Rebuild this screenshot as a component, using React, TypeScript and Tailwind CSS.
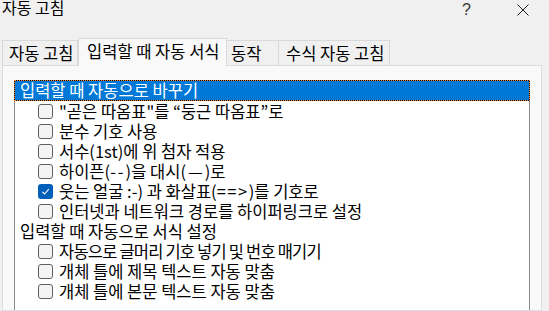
import React from "react";

const font = { fontFamily: '"Noto Sans CJK KR", "Noto Sans", sans-serif' };

function Box({ checked }: { checked?: boolean }) {
  if (checked) {
    return (
      <div className="w-[15px] h-[15px] rounded-[3px] bg-[#005fb8] flex items-center justify-center shrink-0">
        <svg width="11" height="11" viewBox="0 0 11 11">
          <path d="M2.3 5.8 L4.6 8 L8.8 3.2" fill="none" stroke="white" strokeWidth="1.1" />
        </svg>
      </div>
    );
  }
  return <div className="w-[15px] h-[15px] rounded-[3px] border border-[#5f5f5f] bg-[#f4f4f4] shrink-0" />;
}

function Row({ label, checked, tight }: { label: React.ReactNode; checked?: boolean; tight?: boolean }) {
  return (
    <div className="h-[20px] flex items-center pl-[23px]">
      <Box checked={checked} />
      <span
        className={
          tight
            ? "ml-[6px] text-[16.5px] leading-[20px] text-black whitespace-nowrap tracking-[-0.8px]"
            : "ml-[6px] text-[16.5px] leading-[20px] text-black whitespace-nowrap"
        }
      >
        {label}
      </span>
    </div>
  );
}

export default function App() {
  return (
    <div className="w-[549px] h-[311px] bg-[#f0f0f0] overflow-hidden flex flex-col" style={font}>
      <div className="h-[38px] flex items-start shrink-0">
        <span className="ml-[2px] mt-[-3px] text-[16px] leading-[20px] text-black whitespace-nowrap">자동 고침</span>
        <div className="ml-auto flex items-start mr-[20px] mt-[3px]">
          <span className="text-[16px] leading-[14px] text-[#333]" style={{ fontFamily: '"Liberation Sans", sans-serif' }}>?</span>
          <svg className="ml-[46px] mt-[1px]" width="12" height="12" viewBox="0 0 12 12">
            <path d="M0.5 0.5 L11.5 11.5 M11.5 0.5 L0.5 11.5" stroke="#222" strokeWidth="1" />
          </svg>
        </div>
      </div>
      <div className="h-[27px] flex items-end pl-[2px] shrink-0">
        <div className="w-[76px] h-[25px] border border-b-0 border-[#d9d9d9] bg-[#f0f0f0] pl-[6px] text-[16.5px] leading-[24px] text-black whitespace-nowrap overflow-hidden">
          자동 고침
        </div>
        <div className="relative z-10 w-[149px] h-[28px] -mb-px border border-b-0 border-[#d9d9d9] bg-[#f9f9f9] pl-[8px] text-[16.5px] leading-[24px] text-black whitespace-nowrap overflow-hidden">
          입력할 때 자동 서식
        </div>
        <div className="w-[52px] h-[25px] border border-b-0 border-l-0 border-[#d9d9d9] bg-[#f0f0f0] pl-[4px] text-[16.5px] leading-[24px] text-black whitespace-nowrap overflow-hidden">
          동작
        </div>
        <div className="w-[111px] h-[25px] border border-b-0 border-l-0 border-[#d9d9d9] bg-[#f0f0f0] pl-[7px] text-[16.5px] leading-[24px] text-black whitespace-nowrap overflow-hidden">
          수식 자동 고침
        </div>
      </div>
      <div className="flex-1 ml-[2px] mr-[7px] border border-[#dcdcdc] bg-[#f9f9f9] pt-[14px] pl-[11px] overflow-hidden">
        <div className="w-[516px]">
          <div className="h-[21px] bg-black">
            <div className="h-full border border-dotted border-[#ff8a26] bg-[#0078d7] bg-clip-padding pl-[5px] text-[16.5px] leading-[18px] text-white whitespace-nowrap">
              입력할 때 자동으로 바꾸기
            </div>
          </div>
          <div className="border-x border-[#8a8a8a] bg-white h-[260px]">
            <Row label={'"곧은 따옴표"를 “둥근 따옴표”로'} />
            <Row label="분수 기호 사용" />
            <Row label="서수(1st)에 위 첨자 적용" />
            <Row
              label={
                <>
                  하이픈(<span className="tracking-[2px]">--</span>)을 대시(<span className="px-[2px]">—</span>)로
                </>
              }
            />
            <Row
              label={
                <>
                  웃는 얼굴 :-) 과 화살표(<span className="tracking-[1.5px]">==&gt;</span>)를 기호로
                </>
              }
              checked
            />
            <Row label="인터넷과 네트워크 경로를 하이퍼링크로 설정" />
            <div className="h-[20px] flex items-center pl-[5px] text-[16.5px] leading-[20px] text-black whitespace-nowrap">
              입력할 때 자동으로 서식 설정
            </div>
            <Row label="자동으로 글머리 기호 넣기 및 번호 매기기" tight />
            <Row label="개체 틀에 제목 텍스트 자동 맞춤" />
            <Row label="개체 틀에 본문 텍스트 자동 맞춤" />
          </div>
        </div>
      </div>
    </div>
  );
}
